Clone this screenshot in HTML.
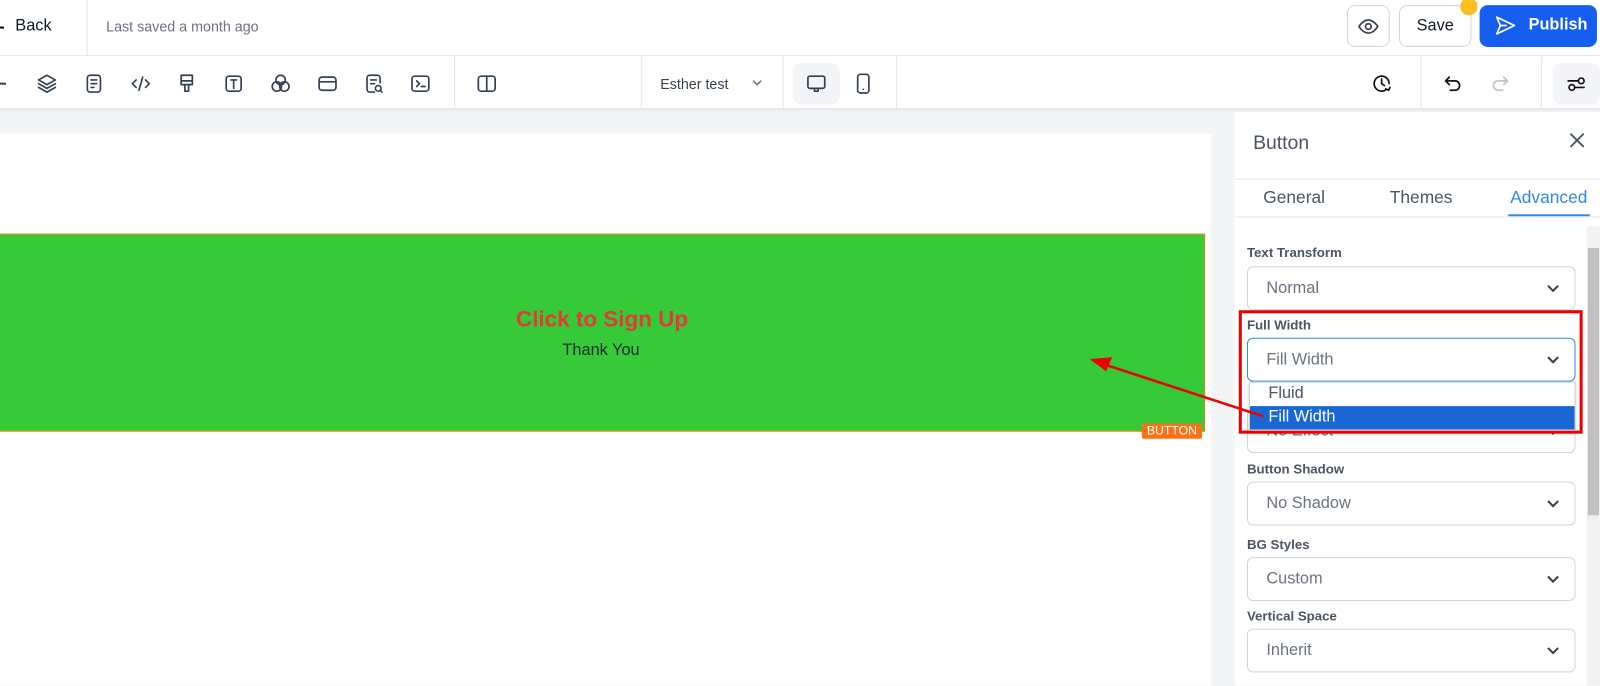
<!DOCTYPE html>
<html><head><meta charset="utf-8"><style>
*{box-sizing:border-box;margin:0;padding:0}
html,body{width:1600px;height:672px;overflow:hidden;background:#f3f4f6}
#w{position:absolute;left:0;top:0;width:1568px;height:659px;transform:scale(1.02041);transform-origin:0 0;font-family:"Liberation Sans",sans-serif;color:#111827}
.abs{position:absolute}
svg{display:block}
.ic{position:absolute;width:22px;height:22px;fill:none;stroke:#344054;stroke-width:1.8;stroke-linecap:round;stroke-linejoin:round}
.lbl{position:absolute;left:1222px;font-size:13px;color:#4b5563;font-weight:bold}
.sel{position:absolute;left:1222px;width:322px;height:43px;border:1px solid #d1d5db;border-radius:6px;background:#fff;font-size:16px;color:#6b7280;padding:12px 0 0 18px}
.chev{position:absolute;right:14px;top:14px;width:14px;height:14px;fill:none;stroke:#374151;stroke-width:2}
</style></head><body><div id="w">
<div class="abs" style="left:0;top:0;width:1600px;height:55px;background:#fff;border-bottom:1px solid #e5e7eb"></div>
<div class="abs" style="left:0;top:26px;width:4px;height:1.5px;background:#111"></div>
<div class="abs" style="left:15px;top:17px;font-size:16px;color:#111827">Back</div>
<div class="abs" style="left:85px;top:0;width:1px;height:54px;background:#e5e7eb"></div>
<div class="abs" style="left:104px;top:18px;font-size:14px;color:#6b7280">Last saved a month ago</div>
<div class="abs" style="left:1320px;top:5px;width:42px;height:41px;border:1px solid #d1d5db;border-radius:8px;background:#fff"></div>
<svg class="ic" style="left:1330px;top:15px" viewBox="0 0 24 24"><path d="M2 12s4-7 10-7 10 7 10 7-4 7-10 7S2 12 2 12z"/><circle cx="12" cy="12" r="3"/></svg>
<div class="abs" style="left:1371px;top:5px;width:71px;height:41px;border:1px solid #d1d5db;border-radius:8px;background:#fff;font-size:16px;text-align:center;line-height:39px">Save</div>
<div class="abs" style="left:1431px;top:-2px;width:17px;height:17px;border-radius:50%;background:#fbbf24"></div>
<div class="abs" style="left:1450px;top:5px;width:115px;height:41px;border-radius:8px;background:#155eef;color:#fff;font-weight:bold;font-size:16px;line-height:40px;padding-left:48px">Publish</div>
<svg class="ic" style="left:1464px;top:14px;stroke:#fff" viewBox="0 0 24 24"><path d="M3 3l19 9-19 9 4-9z M7 12h6"/></svg>
<div class="abs" style="left:0;top:55px;width:1600px;height:53px;background:#fff;border-bottom:2px solid #e5e7eb"></div>
<div class="abs" style="left:0;top:81px;width:6px;height:2px;background:#344054"></div>
<svg class="ic" style="left:35px;top:71px" viewBox="0 0 24 24"><path d="M12 3l9 5-9 5-9-5z M3 12l9 5 9-5 M3 16l9 5 9-5"/></svg>
<svg class="ic" style="left:81px;top:71px" viewBox="0 0 24 24"><rect x="5" y="3" width="14" height="18" rx="3"/><path d="M9 8h6M9 12h6M9 16h3"/></svg>
<svg class="ic" style="left:127px;top:71px" viewBox="0 0 24 24"><path d="M7 8l-4 4 4 4M17 8l4 4-4 4M14 5l-4 14"/></svg>
<svg class="ic" style="left:172px;top:71px" viewBox="0 0 24 24"><path d="M6 3h12v10H6z M6 9h12 M10 13v7h4v-7"/></svg>
<svg class="ic" style="left:218px;top:71px" viewBox="0 0 24 24"><rect x="4" y="4" width="16" height="16" rx="3"/><path d="M9 8h6M12 8v9"/></svg>
<svg class="ic" style="left:264px;top:71px" viewBox="0 0 24 24"><circle cx="12" cy="8" r="5"/><circle cx="8" cy="15" r="5"/><circle cx="16" cy="15" r="5"/></svg>
<svg class="ic" style="left:310px;top:71px" viewBox="0 0 24 24"><rect x="3" y="5" width="18" height="14" rx="3"/><path d="M3 10h18"/></svg>
<svg class="ic" style="left:356px;top:71px" viewBox="0 0 24 24"><path d="M12 21H7a3 3 0 01-3-3V6a3 3 0 013-3h8a3 3 0 013 3v5M8 8h6M8 12h4"/><circle cx="16" cy="17" r="3"/><path d="M18 19l2 2"/></svg>
<svg class="ic" style="left:401px;top:71px" viewBox="0 0 24 24"><rect x="3" y="4" width="18" height="16" rx="3"/><path d="M8 9l3 3-3 3M13 15h4"/></svg>
<div class="abs" style="left:445px;top:55px;width:1px;height:52px;background:#e5e7eb"></div>
<svg class="ic" style="left:466px;top:71px" viewBox="0 0 24 24"><rect x="3" y="4" width="18" height="16" rx="3"/><path d="M12 4v16"/></svg>
<div class="abs" style="left:628px;top:55px;width:1px;height:52px;background:#e5e7eb"></div>
<div class="abs" style="left:647px;top:74px;font-size:14px;color:#374151">Esther test</div>
<svg class="abs" style="left:737px;top:76px;width:10px;height:10px;fill:none;stroke:#6b7280;stroke-width:1.5" viewBox="0 0 10 10"><path d="M1 3l4 4 4-4"/></svg>
<div class="abs" style="left:767px;top:55px;width:1px;height:52px;background:#e5e7eb"></div>
<div class="abs" style="left:777px;top:62px;width:46px;height:40px;border-radius:8px;background:#f2f4f7"></div>
<svg class="ic" style="left:789px;top:71px" viewBox="0 0 24 24"><rect x="3" y="4" width="18" height="13" rx="2"/><path d="M10 17v3h4v-3"/></svg>
<svg class="ic" style="left:835px;top:71px" viewBox="0 0 24 24"><rect x="6" y="2" width="12" height="20" rx="3"/><path d="M12 18h.01"/></svg>
<div class="abs" style="left:878px;top:55px;width:1px;height:52px;background:#e5e7eb"></div>
<svg class="ic" style="left:1343px;top:71px;stroke:#111" viewBox="0 0 24 24"><path d="M20 12a8 8 0 10-3 6.2M12 7v5l3 2M21 16l-1.5 3-3-1.5"/></svg>
<div class="abs" style="left:1392px;top:55px;width:1px;height:52px;background:#e5e7eb"></div>
<svg class="ic" style="left:1413px;top:71px;stroke:#111" viewBox="0 0 24 24"><path d="M8 5L4 9l4 4M4 9h10a5 5 0 010 10H9"/></svg>
<svg class="ic" style="left:1459px;top:71px;stroke:#c0c4cc" viewBox="0 0 24 24"><path d="M16 5l4 4-4 4M20 9H10a5 5 0 000 10h5"/></svg>
<div class="abs" style="left:1510px;top:55px;width:1px;height:52px;background:#e5e7eb"></div>
<div class="abs" style="left:1522px;top:62px;width:46px;height:40px;border-radius:8px;background:#f2f4f7"></div>
<svg class="ic" style="left:1534px;top:71px;stroke:#111" viewBox="0 0 24 24"><path d="M3 9h11M20 16H10"/><circle cx="17" cy="9" r="3"/><circle cx="7" cy="16" r="3"/></svg>
<div class="abs" style="left:0;top:131px;width:1187px;height:541px;background:#fff"></div>
<div class="abs" style="left:0;top:229px;width:1181px;height:194px;background:#36ca38;border:1px solid #e8860d;border-left:none"></div>
<div class="abs" style="left:0;top:300px;width:1180px;text-align:center;font-size:22px;font-weight:bold;color:#e53935">Click to Sign Up</div>
<div class="abs" style="left:0;top:335px;width:1178px;text-align:center;font-size:16px;color:#1f2937">Thank You</div>
<div class="abs" style="left:1119px;top:415px;width:59px;height:15px;background:#f97316;color:#fff;font-size:12px;line-height:15px;text-align:center;border-radius:2px">BUTTON</div>
<div class="abs" style="left:1210px;top:110px;width:390px;height:562px;background:#fff"></div>
<div class="abs" style="left:1228px;top:130px;font-size:19px;color:#4b5563">Button</div>
<svg class="abs" style="left:1538px;top:130px;width:15px;height:15px;stroke:#4b5563;stroke-width:1.8" viewBox="0 0 15 15"><path d="M1 1l13 13M14 1L1 14"/></svg>
<div class="abs" style="left:1210px;top:175px;width:390px;height:1px;background:#e5e7eb"></div>
<div class="abs" style="left:1238px;top:184px;font-size:17px;color:#4b5563">General</div>
<div class="abs" style="left:1362px;top:184px;font-size:17px;color:#4b5563">Themes</div>
<div class="abs" style="left:1480px;top:184px;font-size:17px;color:#2e8ae6">Advanced</div>
<div class="abs" style="left:1478px;top:210px;width:80px;height:2px;background:#2e8ae6"></div>
<div class="abs" style="left:1210px;top:212px;width:390px;height:1px;background:#e5e7eb"></div>
<div class="abs" style="left:1555px;top:222px;width:13px;height:450px;background:#f1f1f1"></div>
<div class="abs" style="left:1556px;top:243px;width:11px;height:262px;background:#c1c1c1"></div>
<div class="lbl" style="top:240px">Text Transform</div>
<div class="sel" style="top:261px">Normal<svg class="chev" viewBox="0 0 14 14"><path d="M2 4l5 5 5-5"/></svg></div>
<div class="lbl" style="top:311px">Full Width</div>
<div class="sel" style="top:331px;border:1.5px solid #2e8ae6">Fill Width<svg class="chev" viewBox="0 0 14 14"><path d="M2 4l5 5 5-5"/></svg></div>
<div class="sel" style="top:401px;height:43px;padding-top:12px">No Effect<svg class="chev" viewBox="0 0 14 14"><path d="M2 4l5 5 5-5"/></svg></div>
<div class="abs" style="left:1224px;top:374px;width:320px;height:49px;background:#fff;border:1px solid #ccc;box-shadow:0 2px 4px rgba(0,0,0,.2)"></div>
<div class="abs" style="left:1243px;top:377px;font-size:16px;color:#4b5563">Fluid</div>
<div class="abs" style="left:1225px;top:398px;width:318px;height:23px;background:#1967d2;color:#fff;font-size:16px;padding:2px 0 0 18px">Fill Width</div>
<div class="abs" style="left:1214px;top:304px;width:337px;height:121px;border:3px solid #e00"></div>
<div class="lbl" style="top:452px">Button Shadow</div>
<div class="sel" style="top:472px">No Shadow<svg class="chev" viewBox="0 0 14 14"><path d="M2 4l5 5 5-5"/></svg></div>
<div class="lbl" style="top:526px">BG Styles</div>
<div class="sel" style="top:546px">Custom<svg class="chev" viewBox="0 0 14 14"><path d="M2 4l5 5 5-5"/></svg></div>
<div class="lbl" style="top:596px">Vertical Space</div>
<div class="sel" style="top:616px">Inherit<svg class="chev" viewBox="0 0 14 14"><path d="M2 4l5 5 5-5"/></svg></div>
<svg class="abs" style="left:0;top:0;width:1600px;height:672px" viewBox="0 0 1600 672"><path d="M1238 408L1085 358" stroke="#e00" stroke-width="2.5"/><path d="M1068 352l22-2-6 14z" fill="#e00"/></svg>
</div></body></html>
